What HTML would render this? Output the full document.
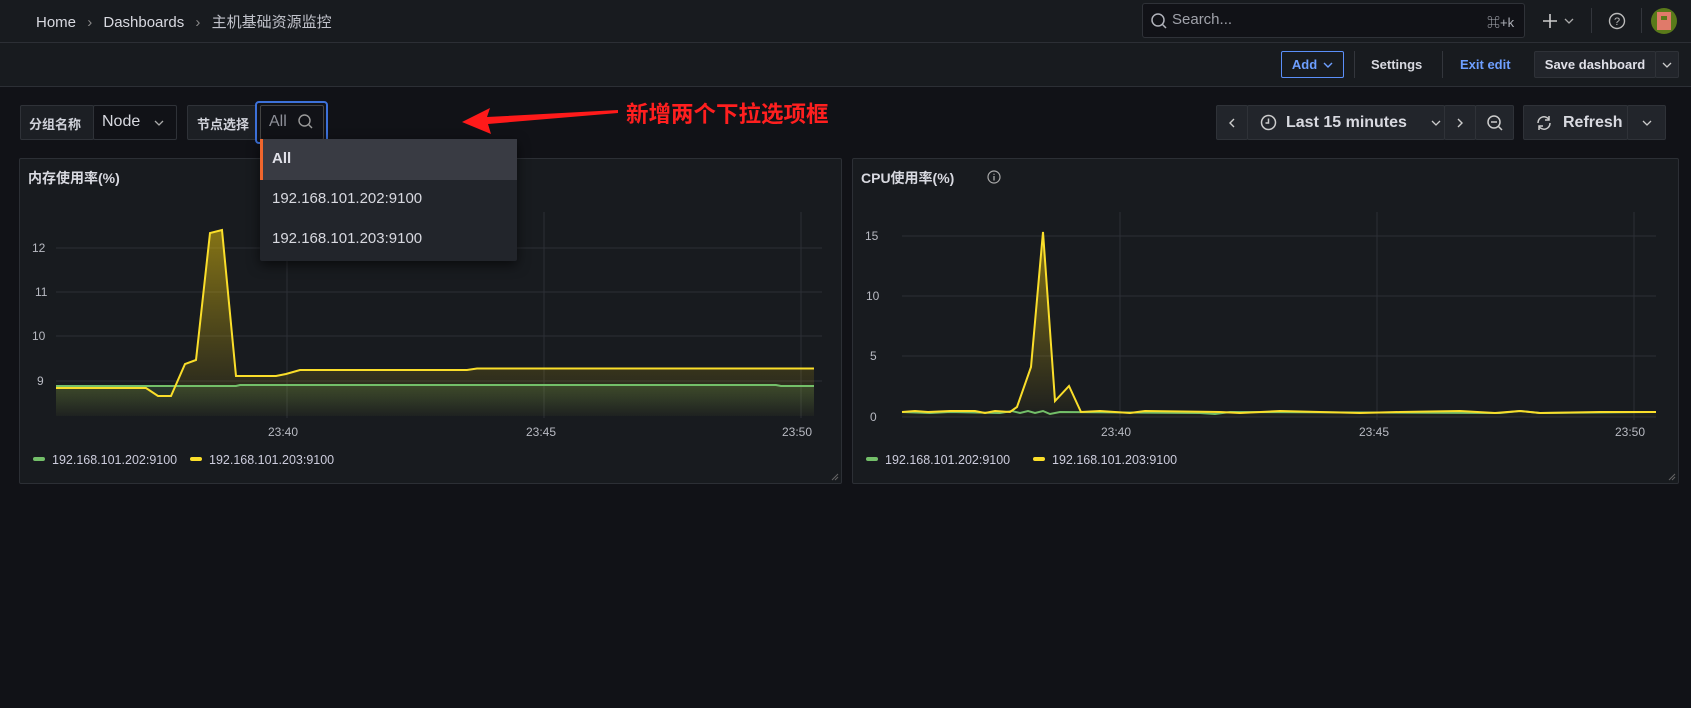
<!DOCTYPE html>
<html><head><meta charset="utf-8"><style>
*{box-sizing:border-box;margin:0;padding:0}
body{width:1691px;height:708px;background:#111217;font-family:"Liberation Sans","Noto Sans CJK SC",sans-serif;color:#ccccdc;position:relative;overflow:hidden;font-size:14px}
.abs{position:absolute}
.hdr{left:0;top:0;width:1691px;height:43px;background:#181b1f;border-bottom:1px solid #2c2f35}
.tb{left:0;top:43px;width:1691px;height:44px;background:#181b1f;border-bottom:1px solid #2c2f35}
.box{position:absolute;border:1px solid #2f3238;background:#181b1f;border-radius:2px}
.btn{position:absolute;background:#22252b;border:1px solid #2f3238;border-radius:2px;display:flex;align-items:center;justify-content:center;font-size:14px;color:#ccccdc}
.panel{position:absolute;background:#181b1f;border:1px solid #2c2f35;border-radius:2px}
.lbl{font-size:12px;fill:#b8bac2;font-family:"Liberation Sans",sans-serif}
.chev{display:inline-block;width:10px;height:6px}
</style></head><body>
<div class="abs hdr"></div>
<div class="abs" style="left:36px;top:11px;font-size:15px;color:#d8d9e0">Home <span style="color:#888;margin:0 7px">›</span> Dashboards <span style="color:#888;margin:0 7px">›</span> <span style="color:#c0c2ca">主机基础资源监控</span></div>
<div class="abs" style="left:1142px;top:3px;width:383px;height:35px;background:#111217;border:1px solid #2f3238;border-radius:3px"></div>
<svg class="abs" style="left:1150px;top:12px" width="18" height="18" viewBox="0 0 18 18"><circle cx="8" cy="8" r="6" fill="none" stroke="#b0b2ba" stroke-width="1.5"/><path d="M12.5 12.5 L16 16" stroke="#b0b2ba" stroke-width="1.5"/></svg>
<div class="abs" style="left:1172px;top:11px;font-size:15px;color:#a0a2aa">Search...</div>
<div class="abs" style="left:1487px;top:12px;font-size:13px;color:#b0b2ba">⌘+k</div>
<svg class="abs" style="left:1542px;top:13px" width="16" height="16"><path d="M8 1V15M1 8H15" stroke="#ccc" stroke-width="1.6"/></svg>
<svg class="abs" style="left:1564px;top:18px" width="10" height="6"><path d="M1 1L5 5L9 1" fill="none" stroke="#aaa" stroke-width="1.3"/></svg>
<div class="abs" style="left:1591px;top:8px;width:1px;height:25px;background:#33363c"></div>
<svg class="abs" style="left:1608px;top:12px" width="18" height="18"><circle cx="9" cy="9" r="7.5" fill="none" stroke="#bbb" stroke-width="1.4"/><text x="9" y="13" font-size="11" fill="#bbb" text-anchor="middle" font-family="Liberation Sans">?</text></svg>
<div class="abs" style="left:1641px;top:8px;width:1px;height:25px;background:#33363c"></div>
<div class="abs" style="left:1651px;top:8px;width:26px;height:26px;border-radius:50%;background:#5a7a1a;overflow:hidden"><div style="position:absolute;left:6px;top:4px;width:14px;height:18px;background:#e07a6a"></div><div style="position:absolute;left:10px;top:8px;width:6px;height:4px;background:#5a7a1a"></div></div>

<div class="abs tb"></div>
<div class="abs" style="left:1281px;top:51px;width:63px;height:27px;border:1px solid #5b8ff9;border-radius:2px;color:#6e9fff;font-size:13px;font-weight:bold;display:flex;align-items:center;justify-content:center">Add<svg style="margin-left:6px" width="10" height="6"><path d="M1 1L5 5L9 1" fill="none" stroke="#6e9fff" stroke-width="1.4"/></svg></div>
<div class="abs" style="left:1354px;top:51px;width:1px;height:27px;background:#33363c"></div>
<div class="abs" style="left:1371px;top:57px;font-size:13px;font-weight:bold;color:#d8d9e0">Settings</div>
<div class="abs" style="left:1442px;top:51px;width:1px;height:27px;background:#33363c"></div>
<div class="abs" style="left:1460px;top:57px;font-size:13px;font-weight:bold;color:#6e9fff">Exit edit</div>
<div class="btn" style="left:1534px;top:51px;width:122px;height:27px;font-size:13px;font-weight:bold;color:#e0e0e8">Save dashboard</div>
<div class="btn" style="left:1655px;top:51px;width:24px;height:27px"><svg width="10" height="6"><path d="M1 1L5 5L9 1" fill="none" stroke="#ccc" stroke-width="1.3"/></svg></div>

<!-- variables -->
<div class="box" style="left:20px;top:105px;width:74px;height:35px;background:#1c1f24"></div>
<div class="abs" style="left:29px;top:114px;font-size:13px;font-weight:bold;color:#d0d2da">分组名称</div>
<div class="box" style="left:93px;top:105px;width:84px;height:35px;background:#111217"></div>
<div class="abs" style="left:102px;top:113px;font-size:16px;color:#d8d9e0">Node</div>
<svg class="abs" style="left:154px;top:120px" width="10" height="6"><path d="M1 1L5 5L9 1" fill="none" stroke="#aaa" stroke-width="1.3"/></svg>
<div class="box" style="left:187px;top:105px;width:70px;height:35px;background:#1c1f24"></div>
<div class="abs" style="left:197px;top:114px;font-size:13px;font-weight:bold;color:#d0d2da">节点选择</div>
<div class="abs" style="left:255px;top:101px;width:73px;height:43px;border:2px solid #3d71d9;border-radius:4px;background:#111217"></div>
<div class="abs" style="left:260px;top:105px;width:64px;height:35px;border:1px solid #444;border-radius:2px"></div>
<div class="abs" style="left:269px;top:113px;font-size:16px;color:#8e9099">All</div>
<svg class="abs" style="left:297px;top:113px" width="17" height="17"><circle cx="7.5" cy="7.5" r="5.5" fill="none" stroke="#999" stroke-width="1.4"/><path d="M11.5 11.5L15 15" stroke="#999" stroke-width="1.4"/></svg>

<!-- time picker -->
<div class="btn" style="left:1216px;top:105px;width:32px;height:35px"><svg width="6" height="10"><path d="M5 1L1 5L5 9" fill="none" stroke="#ccc" stroke-width="1.4"/></svg></div>
<div class="btn" style="left:1247px;top:105px;width:198px;height:35px;justify-content:flex-start;padding-left:12px">
<svg width="17" height="17"><circle cx="8.5" cy="8.5" r="7" fill="none" stroke="#ccc" stroke-width="1.5"/><path d="M8.5 4.5V9H5.5" fill="none" stroke="#ccc" stroke-width="1.5"/></svg>
<span style="margin-left:9px;font-size:16px;font-weight:bold;color:#d8d9e0">Last 15 minutes</span><svg style="margin-left:24px" width="10" height="6"><path d="M1 1L5 5L9 1" fill="none" stroke="#ccc" stroke-width="1.3"/></svg></div>
<div class="btn" style="left:1444px;top:105px;width:32px;height:35px"><svg width="6" height="10"><path d="M1 1L5 5L1 9" fill="none" stroke="#ccc" stroke-width="1.4"/></svg></div>
<div class="btn" style="left:1475px;top:105px;width:39px;height:35px"><svg width="18" height="18"><circle cx="8" cy="8" r="6" fill="none" stroke="#ccc" stroke-width="1.5"/><path d="M5 8H11M12.5 12.5L16 16" stroke="#ccc" stroke-width="1.5"/></svg></div>
<div class="btn" style="left:1523px;top:105px;width:105px;height:35px;justify-content:flex-start;padding-left:11px"><svg width="18" height="18"><path d="M3 9A6 6 0 0 1 14 5.5M15 9A6 6 0 0 1 4 12.5" fill="none" stroke="#ccc" stroke-width="1.5"/><path d="M14 2V6H10M4 16V12H8" fill="none" stroke="#ccc" stroke-width="1.5"/></svg><span style="margin-left:10px;font-size:16px;font-weight:bold;color:#d8d9e0">Refresh</span></div>
<div class="btn" style="left:1627px;top:105px;width:39px;height:35px"><svg width="10" height="6"><path d="M1 1L5 5L9 1" fill="none" stroke="#ccc" stroke-width="1.3"/></svg></div>

<!-- panels -->
<div class="panel" style="left:19px;top:158px;width:823px;height:326px"></div>
<div class="abs" style="left:28px;top:168px;font-size:14px;font-weight:bold;color:#d8d9e0">内存使用率(%)</div>
<div class="panel" style="left:852px;top:158px;width:827px;height:326px"></div>
<div class="abs" style="left:861px;top:168px;font-size:14px;font-weight:bold;color:#d8d9e0">CPU使用率(%)</div>
<svg class="abs" style="left:987px;top:170px" width="14" height="14"><circle cx="7" cy="7" r="6" fill="none" stroke="#aaa" stroke-width="1.2"/><path d="M7 6V10.5M7 3.8V4.8" stroke="#aaa" stroke-width="1.3"/></svg>

<svg class="abs" style="left:0;top:0" width="1691" height="500">
<defs>
<linearGradient id="g1" x1="0" y1="0" x2="0" y2="1"><stop offset="0" stop-color="#f2cc0c" stop-opacity="0.5"/><stop offset="1" stop-color="#f2cc0c" stop-opacity="0.02"/></linearGradient>
<linearGradient id="g2" x1="0" y1="0" x2="0" y2="1"><stop offset="0" stop-color="#73bf69" stop-opacity="0.2"/><stop offset="1" stop-color="#73bf69" stop-opacity="0.02"/></linearGradient>
</defs>
<g stroke="#2c2f35" stroke-width="1">
<path d="M56 248H822M56 292H822M56 336H822M56 381H822M287 212V418M544 212V418M801 212V418"/>
<path d="M902 236H1656M902 296H1656M902 356H1656M902 417H1656M1120 212V420M1377 212V420M1634 212V420"/>
</g>
<text class="lbl" x="32" y="252">12</text><text class="lbl" x="35" y="296">11</text><text class="lbl" x="32" y="340">10</text><text class="lbl" x="37" y="385">9</text>
<text class="lbl" x="268" y="436">23:40</text><text class="lbl" x="526" y="436">23:45</text><text class="lbl" x="782" y="436">23:50</text>
<text class="lbl" x="865" y="240">15</text><text class="lbl" x="866" y="300">10</text><text class="lbl" x="870" y="360">5</text><text class="lbl" x="870" y="421">0</text>
<text class="lbl" x="1101" y="436">23:40</text><text class="lbl" x="1359" y="436">23:45</text><text class="lbl" x="1615" y="436">23:50</text>

<path d="M56 386H236L240 385H776L781 386H814V416H56Z" fill="url(#g2)"/>
<path d="M56 388H146L158 396H171L185 364L196 360L210 233L222 230L236 376H276L286 374L300 370H467L477 368.5H814V416H56Z" fill="url(#g1)"/>
<path d="M56 386H236L240 385H776L781 386H814" fill="none" stroke="#73bf69" stroke-width="2"/>
<path d="M56 388H146L158 396H171L185 364L196 360L210 233L222 230L236 376H276L286 374L300 370H467L477 368.5H814" fill="none" stroke="#fade2a" stroke-width="2"/>

<path d="M902 412L1000 413L1017 411L1031 367L1043 232L1055 401L1069 386L1081 412H1656V417H902Z" fill="url(#g1)"/>
<path d="M902 412L930 413L950 412L1000 413L1012 411L1020 413L1028 411L1035 413L1043 411L1050 414L1060 412L1200 413L1215 414L1230 412L1500 413L1520 411L1540 413L1656 412" fill="none" stroke="#73bf69" stroke-width="2"/>
<path d="M902 412L915 411L928 412L950 411L975 411L985 413L995 411L1010 412L1017 407L1031 367L1043 232L1055 401L1069 386L1081 412L1100 411L1130 413L1145 411L1220 412L1240 413L1280 411L1360 413L1400 412L1460 411L1495 413L1520 411L1540 413L1600 412L1656 412" fill="none" stroke="#fade2a" stroke-width="2"/>

<rect x="33" y="457" width="12" height="4" rx="2" fill="#73bf69"/><text x="52" y="464" font-size="12.5" fill="#ccccdc" font-family="Liberation Sans">192.168.101.202:9100</text>
<rect x="190" y="457" width="12" height="4" rx="2" fill="#fade2a"/><text x="209" y="464" font-size="12.5" fill="#ccccdc" font-family="Liberation Sans">192.168.101.203:9100</text>
<rect x="866" y="457" width="12" height="4" rx="2" fill="#73bf69"/><text x="885" y="464" font-size="12.5" fill="#ccccdc" font-family="Liberation Sans">192.168.101.202:9100</text>
<rect x="1033" y="457" width="12" height="4" rx="2" fill="#fade2a"/><text x="1052" y="464" font-size="12.5" fill="#ccccdc" font-family="Liberation Sans">192.168.101.203:9100</text>
<path d="M832 480L838 474M835 480L838 477" stroke="#666" stroke-width="1"/>
<path d="M1669 480L1675 474M1672 480L1675 477" stroke="#666" stroke-width="1"/>
<!-- red arrow -->
<path d="M462 122L490 108L487 117L618 110L618 113L488 124L491 134Z" fill="#ff1a1a"/>
</svg>
<div class="abs" style="left:626px;top:100px;font-size:22.5px;font-weight:bold;color:#ff1f1f;font-family:'Noto Sans CJK SC',sans-serif;line-height:1.2">新增两个下拉选项框</div>

<!-- dropdown -->
<div class="abs" style="left:260px;top:139px;width:257px;height:122px;background:#22252b;border-radius:2px;box-shadow:0 4px 12px rgba(0,0,0,.6)">
<div style="height:41px;background:#393b43;border-left:3px solid #f0662d;padding:11px 0 0 9px;font-size:15px;font-weight:bold;color:#e0e0e8">All</div>
<div style="height:40px;padding:10px 0 0 12px;font-size:15px;color:#d8d9e0">192.168.101.202:9100</div>
<div style="height:40px;padding:10px 0 0 12px;font-size:15px;color:#d8d9e0">192.168.101.203:9100</div>
</div>
</body></html>
